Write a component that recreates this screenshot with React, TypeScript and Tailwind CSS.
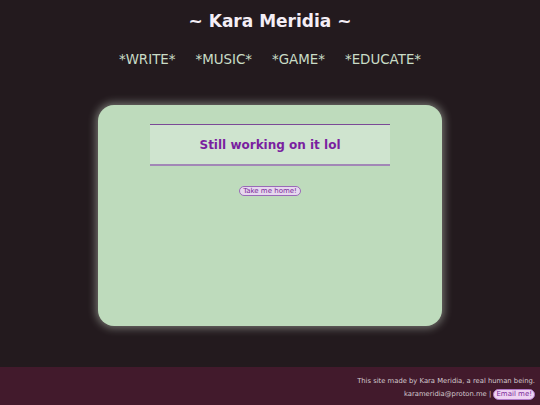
export default function App() {
  const links = ['*WRITE*', '*MUSIC*', '*GAME*', '*EDUCATE*']

  return (
    <div className="min-h-[405px] flex flex-col bg-[#231a1e] font-['DejaVu_Sans',sans-serif]">
      {/* Header */}
      <header className="pt-[11px] text-center">
        <h1 className="text-[17px] leading-[21px] font-bold text-[#f4eef6]">~ Kara Meridia ~</h1>
        <nav className="mt-[19px] flex justify-center gap-[20px] text-[13.4px] leading-[17px] text-[#c9dcc6]">
          {links.map((l) => (
            <a key={l} href="#">{l}</a>
          ))}
        </nav>
      </header>

      {/* Main card */}
      <main className="flex-1 pt-[37px]">
        <div className="mx-auto w-[344px] h-[221px] rounded-[16px] bg-[#bedbbc] shadow-[0_0_8px_2px_rgba(220,230,215,0.45)] pt-[19px]">
          <div className="mx-auto w-[240px] h-[42px] bg-[#cfe4cf] border-t border-t-[#7b4a96] border-b-2 border-b-[#a287b6] flex items-center justify-center">
            <h2 className="text-[12px] font-bold text-[#7a1fa0]">Still working on it lol</h2>
          </div>
          <div className="mt-[20px] flex justify-center">
            <button className="px-[3px] text-[7px] leading-[8px] text-[#7a2a9a] bg-[#e6d8ee] border border-[#9a6ab8] rounded-full">
              Take me home!
            </button>
          </div>
        </div>
      </main>

      {/* Footer */}
      <footer className="h-[38px] bg-[#421a2c] pr-[5px] pt-[8px] text-right text-[6.8px] leading-[13px] text-[#d3c9ce]">
        <p>This site made by Kara Meridia, a real human being.</p>
        <p>
          karameridia@proton.me |{' '}
          <a href="#" className="inline-block px-[2px] text-[7px] leading-[9px] text-[#7a2a9a] bg-[#efd3f2] border border-[#b27ac8] rounded-full">
            Email me!
          </a>
        </p>
      </footer>
    </div>
  )
}
